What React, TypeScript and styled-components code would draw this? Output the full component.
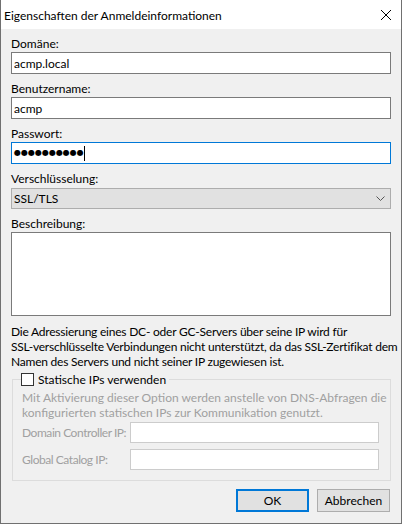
import * as React from 'react'
import styled, { createGlobalStyle } from 'styled-components'

const FONT = `Lato, 'Liberation Sans', Arial, sans-serif`

const GlobalStyle = createGlobalStyle`
  html, body {
    margin: 0;
    padding: 0;
    background: #f0f0f0;
  }
  * {
    box-sizing: border-box;
  }
`

const Window = styled.div`
  width: 402px;
  height: 524px;
  display: flex;
  flex-direction: column;
  background: #f0f0f0;
  border: 1px solid #707070;
  border-top: none;
  font-family: ${FONT};
  font-size: 12px;
  color: #000;
`
const TitleBar = styled.div`
  height: 29px;
  flex: none;
  display: flex;
  align-items: center;
  justify-content: space-between;
  background: #fff;
  padding: 0 8px 0 3px;
  line-height: 15px;
`
const Title = styled.span`
  padding-top: 1px;
`
const CloseButton = styled.button`
  width: 14px;
  height: 14px;
  padding: 0;
  border: none;
  background: transparent;
  display: flex;
  align-items: center;
  justify-content: center;
`
const Content = styled.div`
  flex: 1;
  display: flex;
  flex-direction: column;
  padding: 7px 10px 0 10px;
`
const Field = styled.div`
  display: flex;
  flex-direction: column;
  margin-bottom: 7px;
`
const Label = styled.label<{ space?: number }>`
  line-height: 15px;
  height: 15px;
  margin-bottom: ${p => p.space ?? 1}px;
  white-space: nowrap;
`
const TextBox = styled.input`
  height: 22px;
  width: 100%;
  border: 1px solid #7a7a7a;
  background: #fff;
  padding: 0 2px;
  font-family: ${FONT};
  font-size: 12px;
  color: #000;
  outline: none;
`
const PasswordBox = styled.div`
  height: 22px;
  border: 1px solid #0078d7;
  background: #fff;
  padding: 0 2px;
  display: flex;
  align-items: center;
`
const Dots = styled.span`
  font-family: 'DejaVu Sans', sans-serif;
  font-size: 8px;
  line-height: 20px;
`
const Caret = styled.span`
  width: 1px;
  height: 15px;
  background: #000;
  margin-left: 0;
`
const Select = styled.div`
  height: 21px;
  margin-top: 1px;
  border: 1px solid #adadad;
  background: #e1e1e1;
  padding: 0 5px 0 2px;
  display: flex;
  align-items: center;
  justify-content: space-between;
  line-height: 15px;
`
const TextArea = styled.textarea`
  height: 84px;
  width: 100%;
  border: 1px solid #7a7a7a;
  background: #fff;
  resize: none;
  outline: none;
  font-family: ${FONT};
  font-size: 12px;
  display: block;
`
const Info = styled.p`
  margin: 1px 0 0 0;
  line-height: 15px;
  white-space: nowrap;
  letter-spacing: -0.22px;
`
const Group = styled.fieldset`
  margin: 2px 0 0 1px;
  padding: 3px 11px 10px 9px;
  border: 1px solid #dcdcdc;
  min-width: 0;
`
const Legend = styled.legend`
  display: flex;
  align-items: center;
  gap: 4px;
  padding: 0 3px 0 0;
  margin-left: -1px;
  height: 16px;
  line-height: 15px;
  white-space: nowrap;
`
const CheckBox = styled.span`
  width: 13px;
  height: 13px;
  border: 1px solid #333;
  background: #fff;
  flex: none;
`
const GrayText = styled.p`
  margin: 0 0 2px 0;
  color: #a0a0a0;
  line-height: 15px;
  white-space: nowrap;
`
const IpRow = styled.div`
  display: flex;
  align-items: center;
  margin-top: 6px;
  &:first-of-type {
    margin-top: 0;
  }
`
const IpLabel = styled.span`
  width: 108px;
  flex: none;
  color: #a0a0a0;
  line-height: 15px;
  white-space: nowrap;
  letter-spacing: -0.45px;
`
const IpBox = styled.div`
  flex: 1;
  height: 21px;
  border: 1px solid #cccccc;
  background: #fff;
`
const Footer = styled.div`
  display: flex;
  justify-content: flex-end;
  gap: 8px;
  margin-top: 8px;
  padding-right: 1px;
`
const Button = styled.button<{ primary?: boolean }>`
  width: 73px;
  height: 23px;
  padding: 0;
  background: #e1e1e1;
  border: ${p => (p.primary ? '2px solid #0078d7' : '1px solid #adadad')};
  font-family: ${FONT};
  font-size: 12px;
  color: #000;
`

export default function App() {
  return (
    <>
      <GlobalStyle />
      <Window>
        <TitleBar>
          <Title>Eigenschaften der Anmeldeinformationen</Title>
          <CloseButton aria-label="Schließen">
            <svg width="12" height="12" viewBox="0 0 12 12">
              <path d="M1 1 L11 11 M11 1 L1 11" stroke="#000" strokeWidth="1" fill="none" />
            </svg>
          </CloseButton>
        </TitleBar>
        <Content>
          <Field>
            <Label>Domäne:</Label>
            <TextBox readOnly defaultValue="acmp.local" />
          </Field>
          <Field>
            <Label>Benutzername:</Label>
            <TextBox readOnly defaultValue="acmp" />
          </Field>
          <Field>
            <Label>Passwort:</Label>
            <PasswordBox>
              <Dots>●●●●●●●●●●</Dots>
              <Caret />
            </PasswordBox>
          </Field>
          <Field>
            <Label>Verschlüsselung:</Label>
            <Select>
              <span>SSL/TLS</span>
              <svg width="9" height="5" viewBox="0 0 9 5">
                <path d="M0.5 0.5 L4.5 4.5 L8.5 0.5" stroke="#555" strokeWidth="1" fill="none" />
              </svg>
            </Select>
          </Field>
          <Field>
            <Label space={1}>Beschreibung:</Label>
            <TextArea readOnly />
          </Field>
          <Info>
            Die Adressierung eines DC- oder GC-Servers über seine IP wird für
            <br />
            SSL-verschlüsselte Verbindungen nicht unterstützt, da das SSL-Zertifikat dem
            <br />
            Namen des Servers und nicht seiner IP zugewiesen ist.
          </Info>
          <Group>
            <Legend>
              <CheckBox />
              <span>Statische IPs verwenden</span>
            </Legend>
            <GrayText>
              Mit Aktivierung dieser Option werden anstelle von DNS-Abfragen die
              <br />
              konfigurierten statischen IPs zur Kommunikation genutzt.
            </GrayText>
            <IpRow>
              <IpLabel>Domain Controller IP:</IpLabel>
              <IpBox />
            </IpRow>
            <IpRow>
              <IpLabel>Global Catalog IP:</IpLabel>
              <IpBox />
            </IpRow>
          </Group>
          <Footer>
            <Button primary>OK</Button>
            <Button>Abbrechen</Button>
          </Footer>
        </Content>
      </Window>
    </>
  )
}
